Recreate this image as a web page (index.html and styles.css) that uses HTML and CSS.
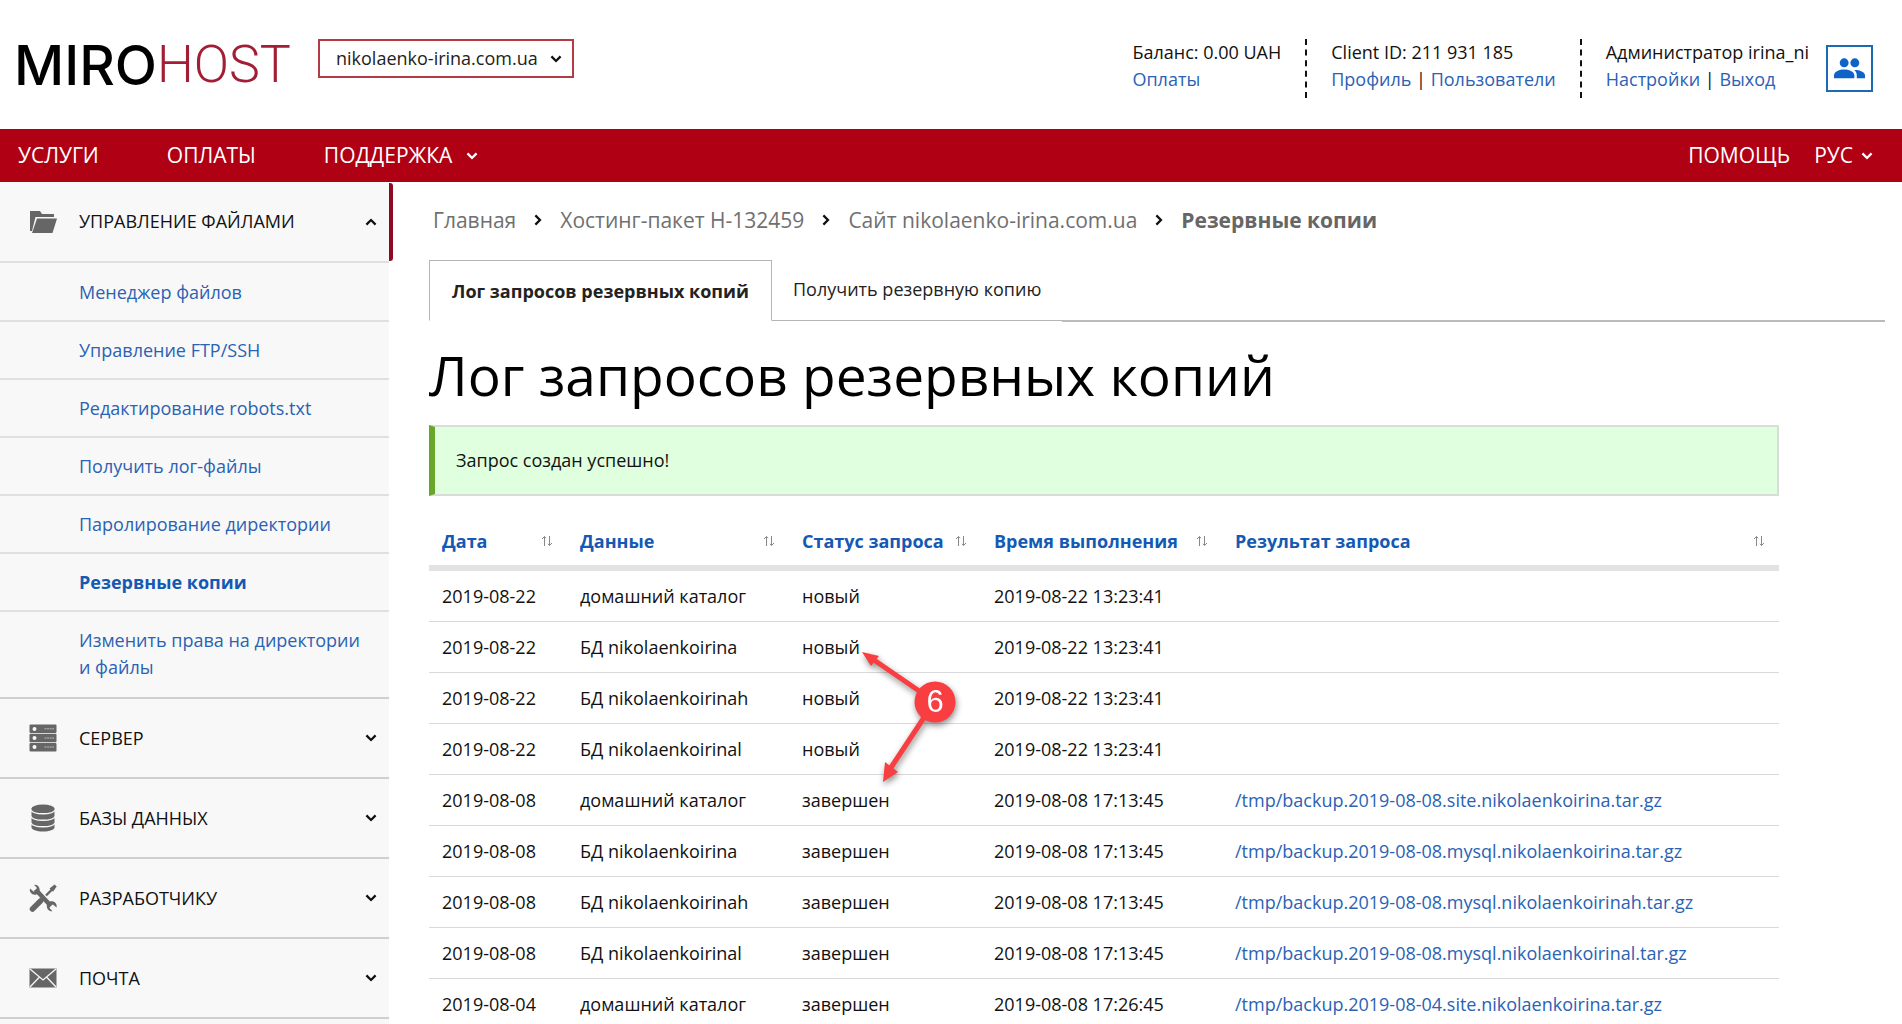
FILE: index.html
```html
<!DOCTYPE html>
<html lang="ru">
<head>
<meta charset="utf-8">
<title>Резервные копии — MIROHOST</title>
<meta name="viewport" content="width=device-width, initial-scale=1">
<link rel="stylesheet" href="styles.css">
</head>
<body>
<svg class="sprite" aria-hidden="true">
  <symbol id="chevron" viewBox="0 0 10 7"><path d="M1 1.2 5 5.2 9 1.2" fill="none" stroke="currentColor" stroke-width="2"/></symbol>
  <symbol id="sort" viewBox="0 0 12 12"><path d="M3.5 11V1.5M1 4l2.500-2.500L5 3.200M8.500 1v9.500M7 8.800l1.500 1.700L11 8" fill="none" stroke="currentColor"/></symbol>
</svg>

<header class="header">
  <a class="logo" href="#"><span class="logo-miro">MIRO</span><span class="logo-host">HOST</span></a>
  <div class="site-picker">
    <select class="site-select" aria-label="Сайт"><option>nikolaenko-irina.com.ua</option></select>
    <svg class="chevron site-chevron"><use href="#chevron"/></svg>
  </div>
  <div class="account">
    <div class="account-cell">
      <div>Баланс: 0.00 UAH</div>
      <div><a href="#">Оплаты</a></div>
    </div>
    <div class="account-cell">
      <div>Client ID: 211 931 185</div>
      <div><a href="#">Профиль</a> | <a href="#">Пользователи</a></div>
    </div>
    <div class="account-cell">
      <div>Администратор irina_ni</div>
      <div><a href="#">Настройки</a> | <a href="#">Выход</a></div>
    </div>
    <button class="users-button" type="button" aria-label="Пользователи">
      <svg class="users-icon" viewBox="0 0 34 24"><circle cx="11.500" cy="6" r="4.600"/><circle cx="22.500" cy="6" r="4.600"/><path d="M1 22v-3c0-4 6-6 10.500-6S22 15 22 19v3z"/><path d="M24.500 22v-3c0-2.500-1-4.300-2.600-5.700 5-.2 11.100 1.700 11.100 5.700v3z"/></svg>
    </button>
  </div>
</header>

<nav class="navbar">
  <a class="nav-link" href="#">УСЛУГИ</a>
  <a class="nav-link" href="#">ОПЛАТЫ</a>
  <a class="nav-link nav-drop" href="#">ПОДДЕРЖКА <svg class="chevron"><use href="#chevron"/></svg></a>
  <div class="nav-right">
    <a class="nav-link" href="#">ПОМОЩЬ</a>
    <a class="nav-link nav-lang" href="#">РУС <svg class="chevron"><use href="#chevron"/></svg></a>
  </div>
</nav>

<div class="layout">
  <aside class="sidebar">
    <button class="section active" type="button">
      <svg class="section-icon" viewBox="0 0 28 28"><path d="M1 3h10l2 3h12v3H6.500L3 23H1z"/><path d="M8 10.500h20L23.500 25H3z"/></svg>
      <span>УПРАВЛЕНИЕ ФАЙЛАМИ</span>
      <svg class="chevron up"><use href="#chevron"/></svg>
    </button>
    <ul class="submenu">
      <li><a href="#">Менеджер файлов</a></li>
      <li><a href="#">Управление FTP/SSH</a></li>
      <li><a href="#">Редактирование robots.txt</a></li>
      <li><a href="#">Получить лог-файлы</a></li>
      <li><a href="#">Паролирование директории</a></li>
      <li><a class="current" href="#">Резервные копии</a></li>
      <li><a href="#">Изменить права на директории и файлы</a></li>
    </ul>
    <button class="section" type="button">
      <svg class="section-icon" viewBox="0 0 28 28"><rect x=".5" y=".5" width="27" height="8.400" rx="1"/><rect x=".5" y="9.800" width="27" height="8.400" rx="1"/><rect x=".5" y="19.100" width="27" height="8.400" rx="1"/><g fill="#f8f8f8"><circle cx="5.500" cy="5" r="2"/><circle cx="5.500" cy="14" r="2"/><circle cx="5.500" cy="23" r="2"/></g><path d="M15.500 4.800h9.500M15.500 14h9.500M15.500 23h9.500" stroke="#bbb" stroke-dasharray="2 .6"/></svg>
      <span>СЕРВЕР</span>
      <svg class="chevron"><use href="#chevron"/></svg>
    </button>
    <button class="section" type="button">
      <svg class="section-icon" viewBox="0 0 28 28"><path d="M2.500 4.500v19c0 2 5 4 11.500 4s11.500-2 11.500-4v-19z"/><ellipse cx="14" cy="4.500" rx="11.500" ry="4"/><path d="M2 6c2 5 22 5 24 0M2 12.500c2 5 22 5 24 0M2 19c2 5 22 5 24 0" fill="none" stroke="#f8f8f8" stroke-width="1.300"/></svg>
      <span>БАЗЫ ДАННЫХ</span>
      <svg class="chevron"><use href="#chevron"/></svg>
    </button>
    <button class="section" type="button">
      <svg class="section-icon" viewBox="0 0 28 28"><path d="M6.500 5.500 22 22" stroke="#666" stroke-width="4.500"/><path d="M5 .8 8 4 7.500 7 4.500 7.500 1 4.500C0 8 3 11.500 7.500 10.500L10.500 7.500C11.500 3.500 8.500 0 5 .8z"/><path d="M23.500 27.200l-3-3.200.5-3 3-.5 3.500 3c1-3.500-2-7-6.500-6L18 20.500c-1 4 2 7.500 5.500 6.700z"/><path d="M17 11.500 23 5.500" stroke="#666" stroke-width="2.400"/><path d="M20.500 4.500 25.500.5l2.200 2L24 7.800z"/><path d="M3.500 25 11.500 17" stroke="#666" stroke-width="5.500" stroke-linecap="round"/></svg>
      <span>РАЗРАБОТЧИКУ</span>
      <svg class="chevron"><use href="#chevron"/></svg>
    </button>
    <button class="section" type="button">
      <svg class="section-icon" viewBox="0 0 28 28"><path d="M.5 4.500h27v19H.5z"/><path d="M1 5l13 11L27 5M1 23l9.500-10M27 23l-9.500-10" fill="none" stroke="#f8f8f8" stroke-width="1.300"/></svg>
      <span>ПОЧТА</span>
      <svg class="chevron"><use href="#chevron"/></svg>
    </button>
  </aside>

  <main class="main">
    <nav class="crumbs" aria-label="Навигация">
      <a href="#">Главная</a><svg class="chevron crumb-sep"><use href="#chevron"/></svg>
      <a href="#">Хостинг-пакет H-132459</a><svg class="chevron crumb-sep"><use href="#chevron"/></svg>
      <a href="#">Сайт nikolaenko-irina.com.ua</a><svg class="chevron crumb-sep"><use href="#chevron"/></svg>
      <strong>Резервные копии</strong>
    </nav>
    <div class="tabs">
      <a class="tab tab-active" href="#">Лог запросов резервных копий</a>
      <a class="tab" href="#">Получить резервную копию</a>
    </div>
    <h1 class="title">Лог запросов резервных копий</h1>
    <div class="content">
      <p class="alert" role="status">Запрос создан успешно!</p>
      <table class="log">
        <colgroup><col class="c-date"><col class="c-data"><col class="c-status"><col class="c-time"><col></colgroup>
        <thead>
          <tr>
            <th><div class="th">Дата <svg class="sort"><use href="#sort"/></svg></div></th>
            <th><div class="th">Данные <svg class="sort"><use href="#sort"/></svg></div></th>
            <th><div class="th">Статус запроса <svg class="sort"><use href="#sort"/></svg></div></th>
            <th><div class="th">Время выполнения <svg class="sort"><use href="#sort"/></svg></div></th>
            <th><div class="th">Результат запроса <svg class="sort"><use href="#sort"/></svg></div></th>
          </tr>
        </thead>
        <tbody>
          <tr><td>2019-08-22</td><td>домашний каталог</td><td>новый</td><td>2019-08-22 13:23:41</td><td></td></tr>
          <tr><td>2019-08-22</td><td>БД nikolaenkoirina</td><td>новый</td><td>2019-08-22 13:23:41</td><td></td></tr>
          <tr><td>2019-08-22</td><td>БД nikolaenkoirinah</td><td>новый</td><td>2019-08-22 13:23:41</td><td></td></tr>
          <tr><td>2019-08-22</td><td>БД nikolaenkoirinal</td><td>новый</td><td>2019-08-22 13:23:41</td><td></td></tr>
          <tr><td>2019-08-08</td><td>домашний каталог</td><td>завершен</td><td>2019-08-08 17:13:45</td><td><a href="#">/tmp/backup.2019-08-08.site.nikolaenkoirina.tar.gz</a></td></tr>
          <tr><td>2019-08-08</td><td>БД nikolaenkoirina</td><td>завершен</td><td>2019-08-08 17:13:45</td><td><a href="#">/tmp/backup.2019-08-08.mysql.nikolaenkoirina.tar.gz</a></td></tr>
          <tr><td>2019-08-08</td><td>БД nikolaenkoirinah</td><td>завершен</td><td>2019-08-08 17:13:45</td><td><a href="#">/tmp/backup.2019-08-08.mysql.nikolaenkoirinah.tar.gz</a></td></tr>
          <tr><td>2019-08-08</td><td>БД nikolaenkoirinal</td><td>завершен</td><td>2019-08-08 17:13:45</td><td><a href="#">/tmp/backup.2019-08-08.mysql.nikolaenkoirinal.tar.gz</a></td></tr>
          <tr><td>2019-08-04</td><td>домашний каталог</td><td>завершен</td><td>2019-08-08 17:26:45</td><td><a href="#">/tmp/backup.2019-08-04.site.nikolaenkoirina.tar.gz</a></td></tr>
        </tbody>
      </table>
      <svg class="callout" viewBox="0 0 110 150">
        <g fill="#f93e41" stroke="#f93e41">
          <path d="M66 50 15 15M68 68 31 124" stroke-width="5"/>
          <path d="M3 7l17 4-8 10zM24 137l2-20 13 10z" stroke="none"/>
          <circle cx="76" cy="57" r="20.500" stroke="none"/>
        </g>
        <text class="callout-number" x="76" y="67">6</text>
      </svg>
    </div>
  </main>
</div>
</body>
</html>
```
FILE: styles.css
```css
* { box-sizing: border-box; }

html { overflow: hidden; }

body {
  margin: 0;
  height: 100vh;
  overflow: hidden;
  background: #fff;
  color: #111;
  font-family: "Open Sans", "Noto Sans", sans-serif;
  font-size: 18px;
  line-height: 27px;
}

a { color: #2a62b4; text-decoration: none; }
button { font: inherit; color: inherit; }

.sprite { display: none; }
.chevron { width: 12px; height: 8px; flex: none; }
.up { transform: rotate(180deg); }

/* Header */
.header { display: flex; height: 129px; padding: 39px 29px 0 14px; }
.logo { display: flex; width: 274px; margin-right: 30px; font-size: 55px; line-height: 52px; color: #000; }
.logo-miro { font-family: Inter, sans-serif; font-weight: 500; }
.logo-host { font-family: Roboto, sans-serif; font-size: 52px; font-weight: 300; color: #a31d34; }

.site-picker { display: grid; height: 39px; align-items: center; }
.site-select {
  grid-area: 1 / 1;
  appearance: none;
  width: 256px;
  height: 39px;
  padding: 0 30px 0 16px;
  border: 2px solid #b23b45;
  background: #fff;
  color: #222;
  font: inherit;
}
.site-chevron { grid-area: 1 / 1; justify-self: end; margin-right: 12px; pointer-events: none; }

.account { display: flex; margin-left: auto; }
.account-cell { height: 59px; margin-right: 24px; white-space: nowrap; }
.account-cell + .account-cell { padding-left: 24px; border-left: 2px dashed #111; }
.account-cell:nth-child(3) { margin-right: 17px; }
.users-button { width: 47px; height: 47px; margin-top: 6px; padding: 0 5px; border: 2px solid #1c6ab4; background: #fff; }
.users-icon { display: block; width: 100%; fill: #0f63c8; }

/* Red bar */
.navbar { display: flex; align-items: center; height: 53px; padding: 0 29px 0 18px; background: #b00013; }
.nav-link { margin-right: 68px; color: #fff; font-size: 21px; }
.nav-drop, .nav-lang { display: flex; align-items: center; gap: 14px; }
.nav-right { display: flex; gap: 24px; margin-left: auto; }
.nav-right .nav-link { margin: 0; }
.nav-lang { gap: 8px; }

.layout { display: flex; }

/* Sidebar */
.sidebar { flex: none; width: 389px; min-height: 842px; background: #f8f8f8; }
.section {
  position: relative;
  display: flex;
  align-items: center;
  gap: 22px;
  width: 100%;
  height: 80px;
  padding: 0 12px 0 29px;
  border: 0;
  border-bottom: 2px solid #cfcfcf;
  background: none;
  text-align: left;
}
.section .chevron { margin-left: auto; }
.section.active { height: 81px; border-color: #e0e0e0; }
.section.active::after {
  content: "";
  position: absolute;
  top: 1px;
  right: -4px;
  bottom: 0;
  width: 4px;
  border-radius: 0 3px 3px 0;
  background: #8e0a24;
}
.section-icon { width: 28px; height: 28px; fill: #666; }
.submenu { margin: 0; padding: 1px 0 0; list-style: none; }
.submenu a { display: block; padding: 15px 20px 14px 79px; border-bottom: 2px solid #e0e0e0; }
.submenu li:last-child a { padding-bottom: 16px; border-color: #cfcfcf; }
.submenu .current { color: #1459b3; font-weight: 700; }

/* Main column */
.main { flex: 1; min-width: 0; padding: 23px 17px 0 40px; }
.crumbs { display: flex; align-items: center; height: 30px; padding-left: 4px; font-size: 21px; color: #666; }
.crumbs a { color: #707070; }
.crumb-sep { margin: 0 16px; color: #111; transform: rotate(-90deg); }

.tabs { display: flex; margin-top: 25px; }
.tabs::after { content: ""; flex: 1; height: 60px; border-bottom: 2px solid #bbb; }
.tab { height: 61px; padding: 16px 21px; border-bottom: 1px solid #b5b5b5; color: #222; }
.tab-active { padding: 17px 22px; border: 1px solid #b5b5b5; border-bottom-color: #fff; background: #fff; font-weight: 700; }

.title { margin: 16px 0 0; font-size: 55px; line-height: 74px; font-weight: 400; color: #000; }

.content { position: relative; max-width: 1350px; }
.alert { margin: 13px 0 0; padding: 20px 21px; border: 2px solid #d8ddd9; border-left: 6px solid #68a52b; background: #dfffdf; }

.log { width: 100%; margin-top: 21px; border-collapse: separate; border-spacing: 0; table-layout: fixed; }
.c-date { width: 138px; }
.c-data { width: 222px; }
.c-status { width: 192px; }
.c-time { width: 241px; }
.log th { height: 54px; padding: 0 14px 0 13px; border-bottom: 6px solid #e2e2e2; color: #1459b3; }
.th { display: flex; align-items: center; justify-content: space-between; white-space: nowrap; }
.sort { flex: none; width: 12px; height: 12px; color: #888; }
.log td { height: 51px; padding: 0 13px; border-bottom: 1px solid #d9d9d9; white-space: nowrap; }

/* Step marker over the table */
.callout { position: absolute; top: 220px; left: 430px; width: 110px; height: 150px; filter: drop-shadow(1px 3px 3px rgba(0, 0, 0, .45)); }
.callout-number { fill: #fff; font: 31px "Liberation Sans", sans-serif; text-anchor: middle; }
```
